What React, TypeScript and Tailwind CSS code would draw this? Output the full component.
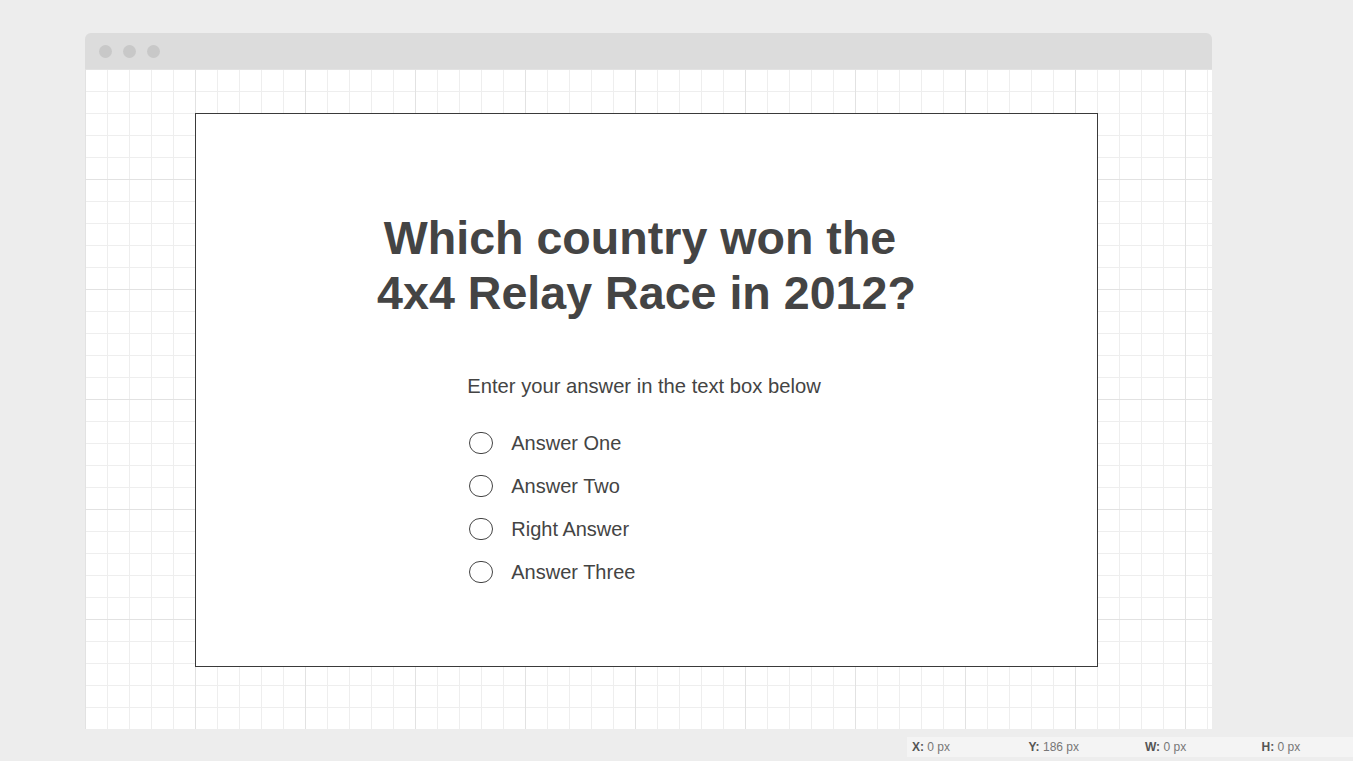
import React from "react";

const answers = ["Answer One", "Answer Two", "Right Answer", "Answer Three"];

export default function App() {
  return (
    <div
      className="w-[1353px] h-[761px] bg-[#ededed] overflow-hidden flex flex-col"
      style={{ fontFamily: '"Liberation Sans", Arial, sans-serif' }}
    >
      <div className="pt-[33px] pl-[85px]">
        <div className="w-[1127px] flex flex-col">
          {/* title bar */}
          <div className="h-[36px] bg-[#dcdcdc] rounded-t-[6px] flex items-center gap-[11px] pl-[14px]">
            <div className="w-[13px] h-[13px] rounded-full bg-[#c8c8c8]" />
            <div className="w-[13px] h-[13px] rounded-full bg-[#c8c8c8]" />
            <div className="w-[13px] h-[13px] rounded-full bg-[#c8c8c8]" />
          </div>
          {/* grid canvas */}
          <div className="h-[660px] bg-white bg-[linear-gradient(to_right,#e2e2e2_1px,transparent_1px),linear-gradient(to_bottom,#e2e2e2_1px,transparent_1px),linear-gradient(to_right,#eeeeee_1px,transparent_1px),linear-gradient(to_bottom,#eeeeee_1px,transparent_1px)] [background-size:110px_110px,110px_110px,22px_22px,22px_22px] pt-[44px] pl-[110px]">
            <div className="w-[903px] h-[554px] bg-white border border-[#3a3a3a] flex flex-col items-center pt-[97px]">
              <h1 className="text-[46.6px] leading-[55px] font-bold text-[#444444] text-center">
                {"Which country won the\u00a0"}
                <br />
                4x4 Relay Race in 2012?
              </h1>
              <div className="mt-[53px] w-fit flex flex-col items-start">
                <p className="text-[20.2px] leading-[24px] text-[#444444] -ml-[5px]">
                  Enter your answer in the text box below
                </p>
                <div className="mt-[33px] flex flex-col gap-[19px] -ml-[3px]">
                  {answers.map((a) => (
                    <div key={a} className="flex items-center gap-[18px] h-[24px]">
                      <div className="w-[24px] h-[22px] rounded-full border border-[#444444]" />
                      <span className="text-[20px] leading-[24px] text-[#444444]">{a}</span>
                    </div>
                  ))}
                </div>
              </div>
            </div>
          </div>
        </div>
      </div>
      {/* status bar */}
      <div className="mt-[8px] flex justify-end">
        <div className="w-[446px] h-[20px] bg-[#f4f4f4] flex items-center pl-[5px] text-[12px] text-[#777777] overflow-hidden">
          {[
            ["X:", "0 px"],
            ["Y:", "186 px"],
            ["W:", "0 px"],
            ["H:", "0 px"],
          ].map(([k, v]) => (
            <div key={k} className="w-[116.5px] shrink-0">
              <span className="font-bold text-[#555555]">{k}</span> {v}
            </div>
          ))}
        </div>
      </div>
    </div>
  );
}
